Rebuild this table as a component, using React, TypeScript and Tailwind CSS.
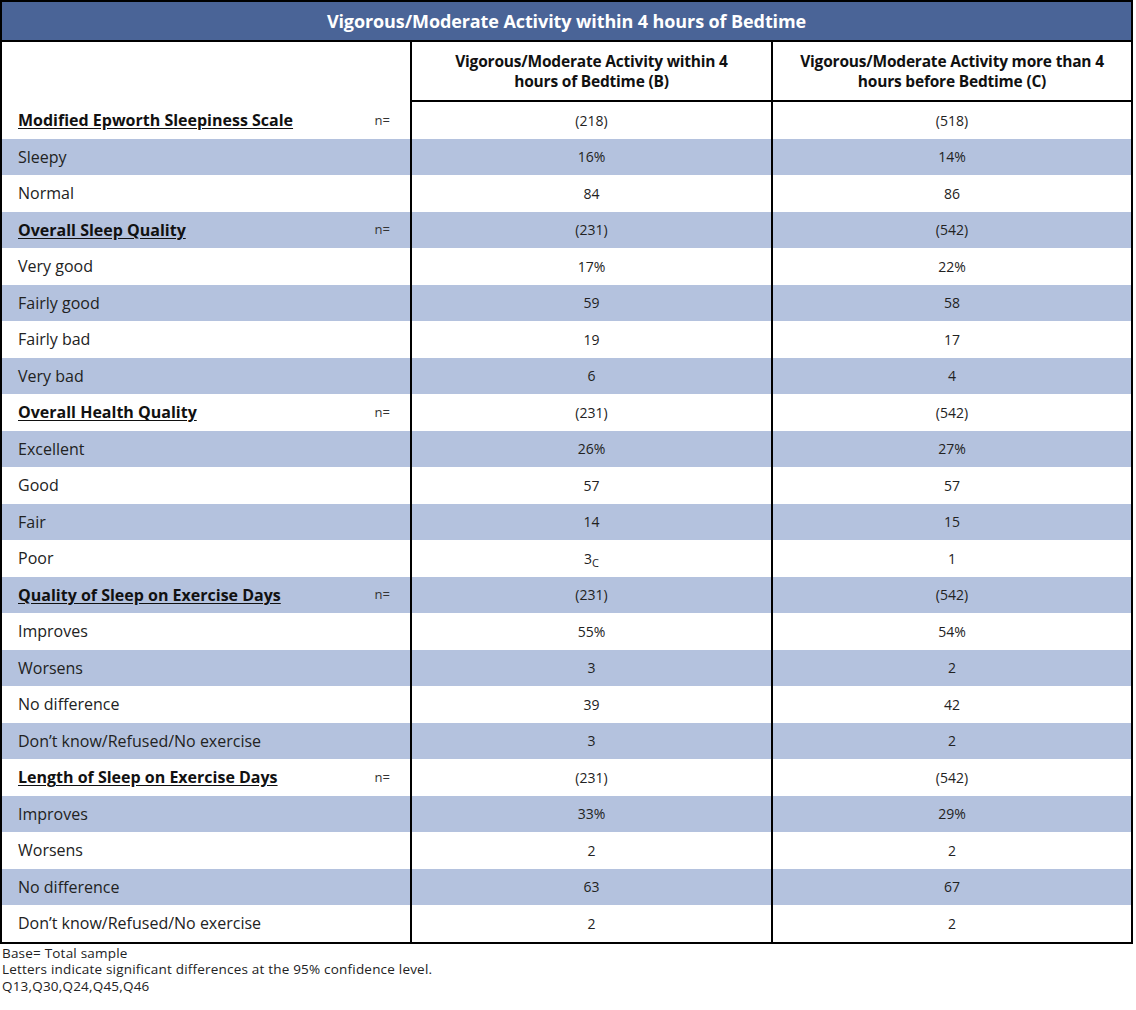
import React from "react";

type Row = { label: string; b: React.ReactNode; c: string; section?: boolean };

const rows: Row[] = [
  { label: "Modified Epworth Sleepiness Scale", b: "(218)", c: "(518)", section: true },
  { label: "Sleepy", b: "16%", c: "14%" },
  { label: "Normal", b: "84", c: "86" },
  { label: "Overall Sleep Quality", b: "(231)", c: "(542)", section: true },
  { label: "Very good", b: "17%", c: "22%" },
  { label: "Fairly good", b: "59", c: "58" },
  { label: "Fairly bad", b: "19", c: "17" },
  { label: "Very bad", b: "6", c: "4" },
  { label: "Overall Health Quality", b: "(231)", c: "(542)", section: true },
  { label: "Excellent", b: "26%", c: "27%" },
  { label: "Good", b: "57", c: "57" },
  { label: "Fair", b: "14", c: "15" },
  {
    label: "Poor",
    b: (
      <span>
        3<sub className="text-[11px] relative top-[3px] align-baseline">C</sub>
      </span>
    ),
    c: "1",
  },
  { label: "Quality of Sleep on Exercise Days", b: "(231)", c: "(542)", section: true },
  { label: "Improves", b: "55%", c: "54%" },
  { label: "Worsens", b: "3", c: "2" },
  { label: "No difference", b: "39", c: "42" },
  { label: "Don\u2019t know/Refused/No exercise", b: "3", c: "2" },
  { label: "Length of Sleep on Exercise Days", b: "(231)", c: "(542)", section: true },
  { label: "Improves", b: "33%", c: "29%" },
  { label: "Worsens", b: "2", c: "2" },
  { label: "No difference", b: "63", c: "67" },
  { label: "Don\u2019t know/Refused/No exercise", b: "2", c: "2" },
];

export default function App() {
  return (
    <div
      className="w-[1136px] h-[1010px] bg-white text-[#222]"
      style={{ fontFamily: '"Open Sans", "DejaVu Sans", sans-serif' }}
    >
      <div className="w-[1133px] border-2 border-black box-border">
        <div className="h-[38px] bg-[#4a6497] border-b-2 border-black box-content flex items-center justify-center text-white font-bold text-[18px] tracking-[-0.1px]">
          Vigorous/Moderate Activity within 4 hours of Bedtime
        </div>
        <div className="flex h-[60px]">
          <div className="w-[408px] shrink-0" />
          <div className="w-[361px] shrink-0 border-l-2 border-b-2 border-black flex items-center justify-center text-center font-bold text-[15.5px] leading-[20px] tracking-[-0.2px] text-[#111]">
            <span>
              Vigorous/Moderate Activity within 4
              <br />
              hours of Bedtime (B)
            </span>
          </div>
          <div className="flex-1 border-l-2 border-b-2 border-black flex items-center justify-center text-center font-bold text-[15.5px] leading-[20px] tracking-[-0.2px] text-[#111]">
            <span>
              Vigorous/Moderate Activity more than 4
              <br />
              hours before Bedtime (C)
            </span>
          </div>
        </div>
        {rows.map((r, i) => (
          <div
            key={i}
            className={`flex h-[36.5px] ${i % 2 === 1 ? "bg-[#b4c2de]" : "bg-white"}`}
          >
            <div className="w-[408px] shrink-0 flex items-center pl-4 pr-[20px] text-[16px]">
              {r.section ? (
                <>
                  <span className="font-bold underline underline-offset-2 text-[16px] text-[#111]">
                    {r.label}
                  </span>
                  <span className="ml-auto text-[13px] text-[#333]">n=</span>
                </>
              ) : (
                <span>{r.label}</span>
              )}
            </div>
            <div className="w-[361px] shrink-0 border-l-2 border-black flex items-center justify-center text-[14px]">
              {r.b}
            </div>
            <div className="flex-1 border-l-2 border-black flex items-center justify-center text-[14px]">
              {r.c}
            </div>
          </div>
        ))}
      </div>
      <div className="pl-[2px] pt-[1px] text-[13.5px] leading-[16.5px] tracking-[0.2px] text-[#222]">
        <div>Base= Total sample</div>
        <div>Letters indicate significant differences at the 95% confidence level.</div>
        <div>Q13,Q30,Q24,Q45,Q46</div>
      </div>
    </div>
  );
}
